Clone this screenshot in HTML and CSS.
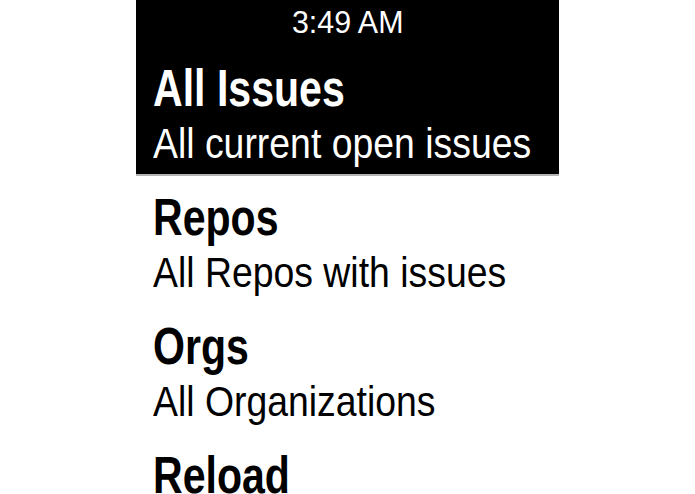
FILE: index.html
```html
<!DOCTYPE html>
<html lang="en">
<head>
    <meta charset="UTF-8">
    <meta name="viewport" content="width=device-width, initial-scale=1.0">
    <title>Issues</title>
    <link rel="stylesheet" href="styles.css">
</head>
<body>
    <div class="screen">
        <div class="status-bar">
            <span class="time">3:49 AM</span>
        </div>
        <ul class="menu">
            <li class="menu-item selected">
                <span class="title">All Issues</span>
                <span class="subtitle">All current open issues</span>
            </li>
            <li class="menu-item">
                <span class="title">Repos</span>
                <span class="subtitle">All Repos with issues</span>
            </li>
            <li class="menu-item">
                <span class="title">Orgs</span>
                <span class="subtitle">All Organizations</span>
            </li>
            <li class="menu-item">
                <span class="title">Reload</span>
            </li>
        </ul>
    </div>
</body>
</html>
```

FILE: styles.css
```css
body {
    margin: 0;
    background-color: #fff;
    font-family: "Liberation Sans", Arial, sans-serif;
}

.screen {
    width: 423px;
    height: 494px;
    margin: 0 auto;
    overflow: hidden;
    background-color: #fff;
    color: #000;
}

.status-bar {
    height: 47px;
    background-color: #000;
    color: #fff;
    text-align: center;
    box-sizing: border-box;
    padding-top: 6px;
}

.time {
    display: inline-block;
    font-size: 32px;
    line-height: 32px;
    transform: scaleX(0.95);
}

.menu {
    list-style: none;
    margin: 0;
    padding: 0;
}

.menu-item {
    height: 129px;
    box-sizing: border-box;
    padding: 15px 0 0 17px;
    display: flex;
    flex-direction: column;
    align-items: flex-start;
    white-space: nowrap;
}

.menu-item.selected {
    background-color: #000;
    color: #fff;
    border-bottom: 2px solid #b4b4b4;
}

.title {
    font-size: 52px;
    line-height: 52px;
    font-weight: bold;
    transform: scaleX(0.79);
    transform-origin: left;
}

.subtitle {
    margin-top: 9px;
    font-size: 42px;
    line-height: 42px;
    transform: scaleX(0.89);
    transform-origin: left;
}
```
